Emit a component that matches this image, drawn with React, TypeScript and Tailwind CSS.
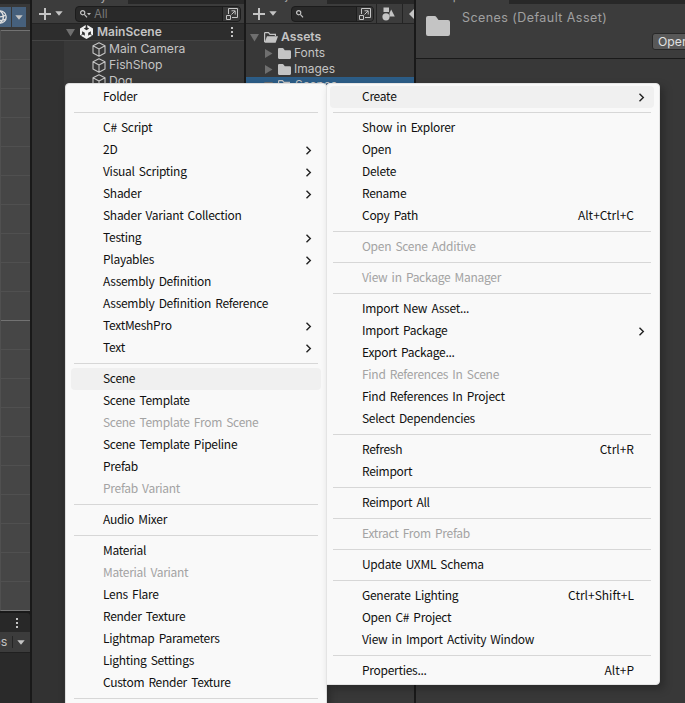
import React from "react";

type Item = { t: string; k?: string; sub?: boolean; off?: boolean; hot?: boolean } | null;

const createMenu: Item[] = [
  { t: "Folder" },
  null,
  { t: "C# Script" },
  { t: "2D", sub: true },
  { t: "Visual Scripting", sub: true },
  { t: "Shader", sub: true },
  { t: "Shader Variant Collection" },
  { t: "Testing", sub: true },
  { t: "Playables", sub: true },
  { t: "Assembly Definition" },
  { t: "Assembly Definition Reference" },
  { t: "TextMeshPro", sub: true },
  { t: "Text", sub: true },
  null,
  { t: "Scene", hot: true },
  { t: "Scene Template" },
  { t: "Scene Template From Scene", off: true },
  { t: "Scene Template Pipeline" },
  { t: "Prefab" },
  { t: "Prefab Variant", off: true },
  null,
  { t: "Audio Mixer" },
  null,
  { t: "Material" },
  { t: "Material Variant", off: true },
  { t: "Lens Flare" },
  { t: "Render Texture" },
  { t: "Lightmap Parameters" },
  { t: "Lighting Settings" },
  { t: "Custom Render Texture" },
  null,
];

const assetMenu: Item[] = [
  { t: "Create", sub: true, hot: true },
  null,
  { t: "Show in Explorer" },
  { t: "Open" },
  { t: "Delete" },
  { t: "Rename" },
  { t: "Copy Path", k: "Alt+Ctrl+C" },
  null,
  { t: "Open Scene Additive", off: true },
  null,
  { t: "View in Package Manager", off: true },
  null,
  { t: "Import New Asset..." },
  { t: "Import Package", sub: true },
  { t: "Export Package..." },
  { t: "Find References In Scene", off: true },
  { t: "Find References In Project" },
  { t: "Select Dependencies" },
  null,
  { t: "Refresh", k: "Ctrl+R" },
  { t: "Reimport" },
  null,
  { t: "Reimport All" },
  null,
  { t: "Extract From Prefab", off: true },
  null,
  { t: "Update UXML Schema" },
  null,
  { t: "Generate Lighting", k: "Ctrl+Shift+L" },
  { t: "Open C# Project" },
  { t: "View in Import Activity Window" },
  null,
  { t: "Properties...", k: "Alt+P" },
];

function MenuRows({ items }: { items: Item[] }) {
  return (
    <>
      {items.map((it, i) =>
        it === null ? (
          <div key={i} className="flex h-[9px] items-center px-[3px]">
            <div className="h-px w-full bg-[#d7d7d7]" />
          </div>
        ) : (
          <div
            key={i}
            className={
              "flex h-[22px] items-center justify-between rounded-[4px] pl-8 " +
              (it.hot ? "bg-[#f0f0f0] " : "") +
              (it.off ? "text-[#a3a3a3]" : "text-[#101010]")
            }
          >
            <span className="pb-0.5 tracking-[-0.28px] whitespace-pre [word-spacing:1.8px]">{it.t}</span>
            {it.k && <span className="mr-5 pb-0.5 whitespace-pre">{it.k}</span>}
            {it.sub && (
              <svg className="mt-px mr-[9px]" width="7" height="9" viewBox="0 0 7 9" fill="none" stroke="#222" strokeWidth="1.4">
                <path d="M1.5 .8 5.3 4.5 1.5 8.2" />
              </svg>
            )}
          </div>
        ),
      )}
    </>
  );
}

function Down({ className = "" }: { className?: string }) {
  return (
    <svg className={"shrink-0 " + className} width="8" height="5" viewBox="0 0 8 5" fill="#c4c4c4">
      <path d="M.3.3h7.4L4 4.8z" />
    </svg>
  );
}

function Fold({ open }: { open?: boolean }) {
  return (
    <svg className="shrink-0" width="9" height="9" viewBox="0 0 9 9" fill="#6f6f6f">
      <path d={open ? "M0 1h9L4.5 8.5z" : "M1 0v9l7.5-4.5z"} />
    </svg>
  );
}

function Plus() {
  return (
    <svg className="shrink-0" width="12" height="12" viewBox="0 0 12 12" stroke="#c4c4c4" strokeWidth="2">
      <path d="M6 0v12M0 6h12" />
    </svg>
  );
}

function Cube() {
  return (
    <svg className="shrink-0" width="14" height="15" viewBox="0 0 14 15" fill="none" stroke="#c4c4c4" strokeWidth="1.1" strokeLinejoin="round">
      <path d="M7 .8 13 3.8v7.2L7 14.2 1 11V3.8zM1 3.8 7 7l6-3.2M7 7v7.2" />
    </svg>
  );
}

function UnityLogo() {
  return (
    <svg className="shrink-0" width="13" height="14" viewBox="0 0 13 14" fill="#f0f0f0">
      <path d="M5.700 0v2.500L3.800 3.600 6.500 5.200 9.200 3.600 7.300 2.500V0L13 3.400v7L10.900 9.200V6.200L8.200 7.700v3L10.100 9.600l2 1.200L6.500 14 .9 10.800l2-1.200 1.900 1.100v-3L2.100 6.200v3L0 10.400v-7z" />
    </svg>
  );
}

function Folder({ w, h }: { w: number; h: number }) {
  return (
    <svg className="shrink-0" width={w} height={h} viewBox="0 0 24 20" fill="#c4c4c4">
      <path d="M0 2Q0 0 2 0h6.500q1.300 0 2 1.200L12.500 4H22q2 0 2 2v12q0 2-2 2H2q-2 0-2-2z" />
    </svg>
  );
}

function OpenFolder() {
  return (
    <svg className="shrink-0" width="14" height="11" viewBox="0 0 14 11">
      <path d="M.6 10V1.200Q.6.600 1.200.600h3.300L6 2.300h5.400v1.800" fill="none" stroke="#c4c4c4" strokeWidth="1.200" />
      <path d="M3 4.200h11l-2.400 6.500H.5z" fill="#c4c4c4" />
    </svg>
  );
}

function Search({ arrow }: { arrow?: boolean }) {
  return (
    <svg className="shrink-0" width="11" height="8" viewBox="0 0 11 8" fill="none" stroke="#c4c4c4" strokeWidth="1.200">
      <circle cx="2.700" cy="2.700" r="2.100" />
      <path d="M4.300 4.300 7 7.300" />
      {arrow && <path d="M7 3h4L9 5.300z" fill="#c4c4c4" stroke="none" />}
    </svg>
  );
}

function Popout() {
  return (
    <svg className="shrink-0" width="12" height="12" viewBox="0 0 12 12" fill="none" stroke="#c4c4c4">
      <path d="M2.500 6V.5h9v9H6M.5 7.500h4v4h-4zM5.500 6.500l3.500-3.500M5.500 2.800h3.700v3.700" />
    </svg>
  );
}

function Dots() {
  return (
    <svg className="shrink-0" width="2" height="10" viewBox="0 0 2 10" fill="#c4c4c4">
      <path d="M0 0h2v2H0zM0 4h2v2H0zM0 8h2v2H0z" />
    </svg>
  );
}

function TabStrip({ label, tab }: { label: string; tab: string }) {
  return (
    <div className="flex h-1 shrink-0 overflow-hidden bg-[#282828]">
      <div className={"flex items-end overflow-hidden bg-[#3c3c3c] pb-0.5 pl-5 text-[12px] leading-[12px] text-[#a8a8a8] " + tab}>{label}</div>
    </div>
  );
}

const lines = Array.from({ length: 20 }, (_, i) => i);

export default function App() {
  return (
    <div className="relative flex h-[703px] w-[685px] overflow-hidden bg-[#191919] font-[Inter,sans-serif] text-[12.2px] leading-4 text-[#c4c4c4]">
      <div className="mr-0.5 flex w-[30px] shrink-0 flex-col overflow-hidden">
        <div className="h-1 shrink-0 bg-[#282828]" />
        <div className="flex h-[26px] shrink-0 items-start bg-[#383838] pt-[3px]">
          <div className="flex h-5 w-[11px] items-center overflow-hidden bg-[#46607c]">
            <svg className="-ml-[7px] shrink-0" width="14" height="14" viewBox="0 0 14 14" fill="none" stroke="#e0e0e0" strokeWidth="1.300">
              <circle cx="7" cy="7" r="6.200" />
              <path d="M7 1c4.500 3 4.500 9 0 12M1 5c4 2.500 8 2.500 12 0M1 9c4 2 8 2 12 0" />
            </svg>
          </div>
          <div className="ml-px flex h-5 w-3.5 items-center justify-center bg-[#46607c]">
            <Down />
          </div>
        </div>
        <div className="flex h-[581px] shrink-0 flex-col overflow-hidden border-b border-l border-b-[#777] border-l-[#505050] bg-[#464646]">
          {lines.map((i) => (
            <div key={i} className={"h-[29px] shrink-0 border-t " + (i === 0 || i === 10 ? "border-[#727272]" : "border-[#505050]")} />
          ))}
        </div>
        <div className="mt-0.5 flex h-[19px] shrink-0 items-center justify-end rounded-tr-[3px] bg-[#282828] pr-3">
          <Dots />
        </div>
        <div className="flex h-5 shrink-0 items-center bg-[#3c3c3c]">
          <span className="-ml-[7px] w-[20px] text-[12.5px]">ps</span>
          <div className="mr-1 -ml-px h-3 w-px bg-[#252525]" />
          <Down />
        </div>
        <div className="flex-1 border-t border-[#202020] bg-[#2a2a2a]" />
      </div>

      <div className="mr-0.5 flex w-[212px] shrink-0 flex-col bg-[#383838]">
        <TabStrip label="Hierarchy" tab="w-24" />
        <div className="flex h-5 shrink-0 items-center border-b border-[#242424] bg-[#3c3c3c] pl-[7px]">
          <Plus />
          <Down className="ml-1" />
          <div className="ml-3 flex h-4 w-[166px] items-center rounded-[4px] border border-[#1c1c1c] bg-[#292929] pl-1">
            <Search arrow />
            <span className="ml-[3px] flex-1 text-[11.5px] text-[#7a7a7a]">All</span>
            <div className="flex h-full w-[18px] items-center justify-center rounded-r-[3px] border-l border-[#1c1c1c] bg-[#383838]">
              <Popout />
            </div>
          </div>
        </div>
        <div className="flex h-[17px] shrink-0 items-center border-b border-[#444] bg-[#2d2d2d] pr-[11px] pl-[34px]">
          <Fold open />
          <div className="ml-[5px] flex items-center gap-1">
            <UnityLogo />
            <span className="text-[12px] font-semibold">MainScene</span>
          </div>
          <div className="ml-auto">
            <Dots />
          </div>
        </div>
        <div className="flex flex-1">
          <div className="w-8 bg-[#323232]" />
          <div className="flex flex-col pl-7">
            {["Main Camera", "FishShop", "Dog"].map((n) => (
              <div key={n} className="flex h-4 items-center gap-[3px]">
                <Cube />
                <span>{n}</span>
              </div>
            ))}
          </div>
        </div>
      </div>

      <div className="mr-0.5 flex w-[168px] shrink-0 flex-col bg-[#383838]">
        <TabStrip label="Project" tab="w-[81px]" />
        <div className="flex h-5 shrink-0 items-center overflow-hidden border-b border-[#242424] bg-[#3c3c3c] pl-[7px]">
          <Plus />
          <Down className="ml-1" />
          <div className="ml-3.5 flex h-4 w-[83px] shrink-0 items-center justify-between rounded-[4px] border border-[#1c1c1c] bg-[#292929] pl-1">
            <Search />
            <div className="flex h-full w-[17px] items-center justify-center rounded-r-[3px] border-l border-[#1c1c1c] bg-[#383838]">
              <Popout />
            </div>
          </div>
          <div className="ml-0.5 h-full w-px shrink-0 bg-[#242424]" />
          <svg className="ml-[5px] shrink-0" width="13" height="14" viewBox="0 0 13 14" fill="#c4c4c4">
            <path d="M1.500.500h5.500v4.500H1.500zM9.200 2.500 12.800 9.500H7.500L7.500 6z" />
            <circle cx="4" cy="9.800" r="3.600" />
          </svg>
          <div className="ml-[7px] h-full w-px shrink-0 bg-[#242424]" />
          <svg className="ml-1.5 shrink-0" width="8" height="10" viewBox="0 0 8 10" fill="#c4c4c4">
            <path d="M0 5 5 0h3v10H5z" />
          </svg>
        </div>
        <div className="flex flex-col pt-[5px]">
          <div className="flex h-4 items-center pl-1">
            <Fold open />
            <div className="ml-[5px] flex items-center gap-[3px]">
              <OpenFolder />
              <span className="font-semibold">Assets</span>
            </div>
          </div>
          {["Fonts", "Images"].map((n) => (
            <div key={n} className="flex h-4 items-center pl-[18px]">
              <Fold />
              <div className="ml-[5px] flex items-center gap-[3px]">
                <Folder w={13} h={11} />
                <span className="text-[12px]">{n}</span>
              </div>
            </div>
          ))}
          <div className="flex h-4 items-center bg-[#2c5d87] pl-[18px]">
            <Fold open />
            <div className="ml-[5px] flex items-center gap-[3px]">
              <OpenFolder />
              <span className="text-[12px]">Scenes</span>
            </div>
          </div>
        </div>
      </div>

      <div className="flex flex-1 flex-col overflow-hidden bg-[#383838]">
        <TabStrip label="Inspector" tab="w-[93px]" />
        <div className="flex h-[55px] shrink-0 border-b border-[#1a1a1a] bg-[#3c3c3c] pl-[10px]">
          <div className="pt-3">
            <Folder w={24} h={20} />
          </div>
          <span className="mt-1.5 ml-3 w-[145px] shrink-0 text-[12.5px] tracking-[0.44px] whitespace-pre text-[#a0a0a0]">Scenes (Default Asset)</span>
          <div className="mt-[29px] ml-[45px] flex h-[17px] w-12 shrink-0 items-center rounded-[3px] border border-[#282828] bg-[#585858] pl-[5px] text-[#e0e0e0]">
            Open
          </div>
        </div>
      </div>

      <div className="absolute top-[83px] left-[65px] h-[640px] w-[262px] rounded-t-[4px] border border-[#dedede] bg-[#f9f9f9] px-[5px] pt-0.5 font-['Noto_Sans_CJK_KR',sans-serif] text-[12px] shadow-[2px_4px_8px_rgba(0,0,0,0.3)]">
        <MenuRows items={createMenu} />
      </div>
      <div className="absolute top-[83px] left-[326px] h-[602px] w-[334px] rounded-[4px] rounded-bl-none border border-[#e4e4e4] bg-[#f9f9f9] pt-0.5 pr-[5px] pl-[3px] font-['Noto_Sans_CJK_KR',sans-serif] text-[12px] shadow-[4px_4px_8px_rgba(0,0,0,0.25)]">
        <MenuRows items={assetMenu} />
      </div>
    </div>
  );
}
